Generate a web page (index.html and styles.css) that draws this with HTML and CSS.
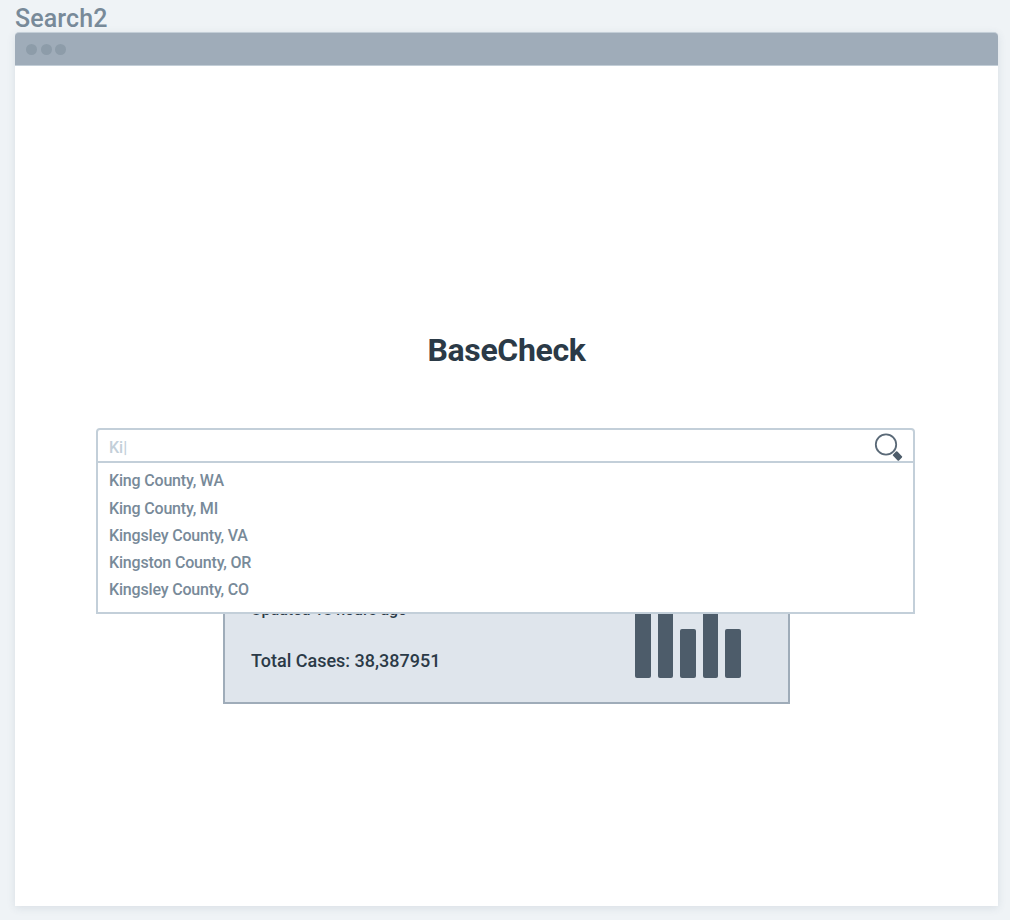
FILE: index.html
```html
<!DOCTYPE html>
<html lang="en">
<head>
<meta charset="utf-8">
<title>Search2</title>
<link rel="stylesheet" href="styles.css">
</head>
<body>
<div class="frame-label"><span>Search2</span></div>
<main class="window">
  <header class="titlebar"><i class="dot"></i><i class="dot"></i><i class="dot"></i></header>
  <section class="content">
    <h1 class="brand"><span>BaseCheck</span></h1>
    <div class="search">
      <div class="field">
        <span class="query">Ki|</span>
        <svg class="magnifier" width="30" height="30" viewBox="0 0 30 30">
          <circle cx="13" cy="13.5" r="10.2" fill="none" stroke="#5a6977" stroke-width="1.8"/>
          <rect x="-4.2" y="-3" width="8.4" height="6" rx="1" fill="#4d5c6a" transform="translate(24.5 25) rotate(45)"/>
        </svg>
      </div>
      <ul class="results">
        <li>King County, WA</li>
        <li>King County, MI</li>
        <li>Kingsley County, VA</li>
        <li>Kingston County, OR</li>
        <li>Kingsley County, CO</li>
      </ul>
    </div>
    <article class="card">
      <div class="facts">
        <p class="updated"><span>Updated 18 hours ago</span></p>
        <p class="total"><span>Total Cases: 38,387951</span></p>
      </div>
      <div class="chart"><i class="bar tall"></i><i class="bar tall"></i><i class="bar"></i><i class="bar tall"></i><i class="bar"></i></div>
    </article>
  </section>
</main>
</body>
</html>
```
FILE: styles.css
```css
* { box-sizing: border-box; }
html { height: 100%; overflow: hidden; }
body {
  margin: 0;
  height: 920px;
  padding: 0 12px 14px 15px;
  display: flex;
  flex-direction: column;
  background: #eff3f6;
  font-family: Roboto, "Liberation Sans", sans-serif;
  font-weight: 500;
  color: #2b3a47;
}
.frame-label {
  height: 32px;
  padding-top: 3px;
  line-height: 32px;
  font-size: 25px;
  letter-spacing: 0.1px;
  color: #788a99;
}
.window {
  flex: 1;
  display: flex;
  flex-direction: column;
  background: #fff;
  border-radius: 4px 4px 0 0;
  box-shadow: 0 2px 8px rgba(60, 85, 105, 0.12);
}
.titlebar {
  height: 34px;
  display: flex;
  align-items: center;
  gap: 3.5px;
  padding-left: 11px;
  background: #9facb9;
  border-top: 1px solid #c3ced7;
  border-bottom: 1px solid #c3ced7;
  border-radius: 4px 4px 0 0;
}
.dot { width: 11px; height: 11px; border-radius: 50%; background: #8d9ca9; }
.content { display: flex; flex-direction: column; align-items: center; padding-top: 264px; }
.brand {
  margin: 0;
  height: 40px;
  line-height: 40px;
  font-size: 32px;
  font-weight: 700;
  letter-spacing: -0.35px;
}
.search { position: relative; width: 819px; margin: 58px 2px 0 0; }
.field {
  height: 35px;
  display: flex;
  justify-content: space-between;
  align-items: flex-start;
  padding: 0 10px 0 11px;
  border: 2px solid #c3cfd9;
  border-radius: 4px 4px 0 0;
}
.query { padding-top: 1px; font-size: 16px; line-height: 33px; color: #c3cfd9; }
.magnifier { margin-top: 1px; }
.results {
  position: absolute;
  top: 33px;
  left: 0;
  width: 819px;
  height: 153px;
  margin: 0;
  padding: 4.3px 11px;
  list-style: none;
  background: #fff;
  border: 2px solid #c3cfd9;
  font-size: 16px;
  line-height: 27.2px;
  letter-spacing: -0.18px;
  color: #788a99;
}
.card {
  width: 567px;
  height: 150px;
  margin-top: 91px;
  display: flex;
  justify-content: space-between;
  padding: 42px 47.5px 24px 26px;
  background: #dfe5ec;
  border: 2px solid #9facb9;
}
.facts { display: flex; flex-direction: column; }
.facts p { margin: 0; }
.updated { line-height: 24px; font-size: 16px; letter-spacing: -0.08px; }
.total { padding-top: 26px; line-height: 26px; font-size: 18px; }
.chart { display: flex; align-items: flex-end; gap: 7px; }
.bar { width: 15.5px; height: 49px; border-radius: 2px; background: #4d5c6a; }
.tall { height: 75px; }
```
